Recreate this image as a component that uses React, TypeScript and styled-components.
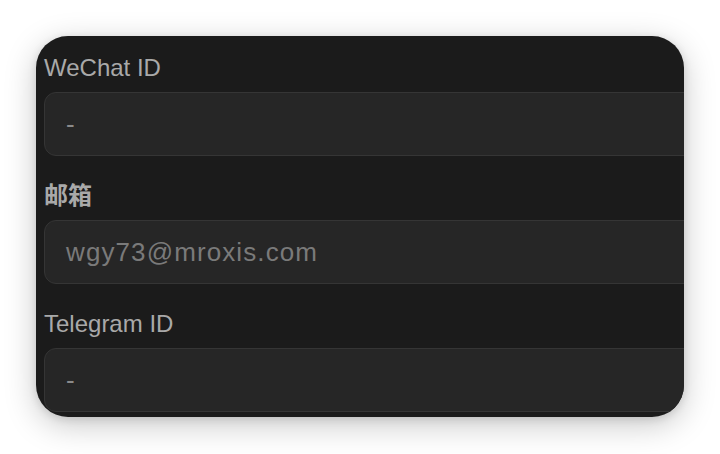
import React from "react";
import styled, { createGlobalStyle } from "styled-components";

const Global = createGlobalStyle`
  html, body { margin: 0; padding: 0; background: #ffffff; }
  body { width: 720px; height: 454px; overflow: hidden; }
`;

const Stage = styled.div`
  width: 720px;
  height: 454px;
  box-sizing: border-box;
  padding: 36px 36px 0 36px;
  background: #ffffff;
`;

const Card = styled.div`
  width: 648px;
  height: 381px;
  box-sizing: border-box;
  background: #1b1b1b;
  border-radius: 32px;
  overflow: hidden;
  padding: 16px 0 0 8px;
  display: flex;
  flex-direction: column;
  gap: 24px;
  box-shadow: 0 8px 32px rgba(0, 0, 0, 0.22), 0 2px 8px rgba(0, 0, 0, 0.12);
`;

const Field = styled.div`
  display: flex;
  flex-direction: column;
  gap: 8px;
  flex-shrink: 0;
`;

const Label = styled.div<{ $cjk?: boolean }>`
  height: 32px;
  line-height: 32px;
  font-family: "Liberation Sans", Arial, "Noto Sans CJK SC", sans-serif;
  font-size: 24px;
  font-weight: ${(p) => (p.$cjk ? 700 : 400)};
  color: #a9a9a9;
  white-space: nowrap;
`;

const Input = styled.div<{ $muted?: boolean }>`
  width: 700px;
  height: 64px;
  box-sizing: border-box;
  border: 1.5px solid #353535;
  border-radius: 12px;
  background: #262626;
  display: flex;
  align-items: center;
  padding-left: 21px;
  font-family: "Liberation Sans", Arial, "Noto Sans CJK SC", sans-serif;
  font-size: 26px;
  letter-spacing: 1.1px;
  color: ${(p) => (p.$muted ? "#8a8a8a" : "#7a7a7a")};
  white-space: nowrap;
`;

const fields = [
  { label: "WeChat ID", value: "-", cjk: false, muted: true },
  { label: "邮箱", value: "wgy73@mroxis.com", cjk: true, muted: false },
  { label: "Telegram ID", value: "-", cjk: false, muted: true },
];

export default function App() {
  return (
    <>
      <Global />
      <Stage>
        <Card>
          {fields.map((f) => (
            <Field key={f.label}>
              <Label $cjk={f.cjk}>{f.label}</Label>
              <Input $muted={f.muted}>{f.value}</Input>
            </Field>
          ))}
        </Card>
      </Stage>
    </>
  );
}
